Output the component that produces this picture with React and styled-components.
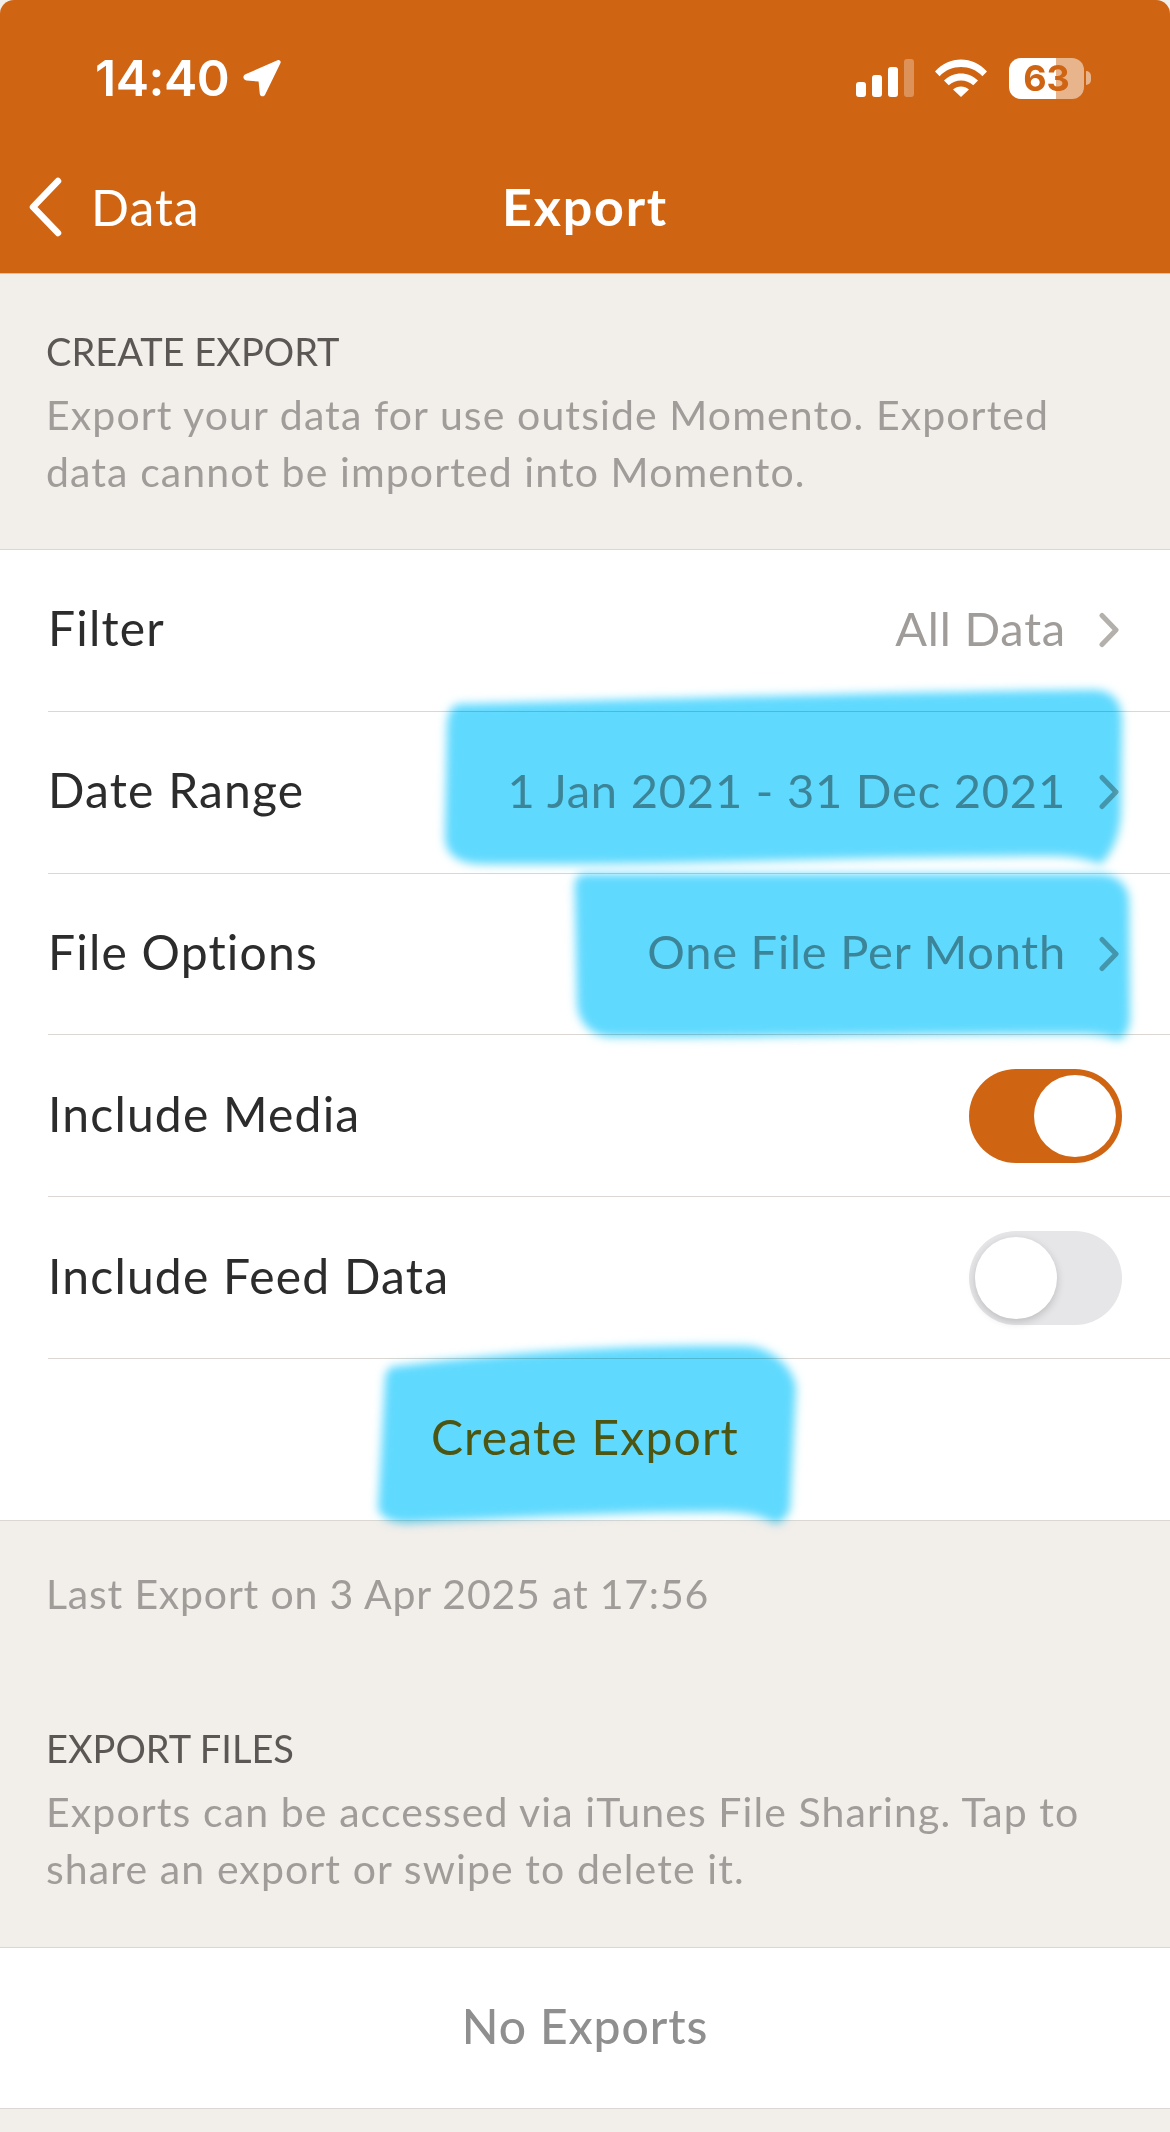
import styled, { createGlobalStyle } from 'styled-components';

const GlobalStyle = createGlobalStyle`
  html, body {
    margin: 0;
    padding: 0;
    background: #ffffff;
    font-family: "Lato", "Noto Sans", sans-serif;
  }
`;

const ORANGE = '#cf6413';

const LocationIcon = () => (
  <svg width="38" height="38" viewBox="0 0 38 38">
    <path
      d="M34.500 1.200c1.900-.9 3.800.9 3 2.800L22.200 35.500c-1.300 2.800-5 2.300-5.400-.8L15.600 22.600 3.500 21.500c-3.500-.3-4.300-4.600-1-6.200z"
      fill="#fff"
    />
  </svg>
);

const SignalIcon = () => (
  <svg width="60" height="38" viewBox="0 0 60 38">
    <rect x="0" y="23" width="10" height="15" rx="3" fill="#fff" />
    <rect x="16" y="16" width="10" height="22" rx="3" fill="#fff" />
    <rect x="32" y="8" width="10" height="30" rx="3" fill="#fff" />
    <rect x="48" y="0" width="10" height="38" rx="3" fill="#fff" opacity="0.3" />
  </svg>
);

const WifiIcon = () => (
  <svg width="52" height="38" viewBox="0 0 52 38">
    <path d="M0 12.500C14-3.500 38-3.500 52 12.500l-4.600 4.800C36 5 16 5 4.600 17.300z" fill="#fff" />
    <path d="M9 21.500c9.500-9.500 24.500-9.500 34 0l-4.700 4.800c-7-6.500-17.600-6.500-24.600 0z" fill="#fff" />
    <path d="M18 30.500c4.500-4 11.500-4 16 0L26 38z" fill="#fff" />
  </svg>
);

const BackIcon = () => (
  <svg width="36" height="60" viewBox="0 0 36 60">
    <path d="M31 4 6 30l25 26" fill="none" stroke="#fff" strokeWidth="6.500" strokeLinecap="round" strokeLinejoin="round" />
  </svg>
);

const ChevronIcon = () => (
  <svg width="22" height="36" viewBox="0 0 22 36">
    <path d="M4 3.500 18 18 4 32.500" fill="none" stroke="#b4b0ac" strokeWidth="5" strokeLinecap="round" strokeLinejoin="round" />
  </svg>
);

const Highlights = () => (
  <HighlightLayer viewBox="0 0 1170 2132">
    <defs>
      <filter id="soft" x="-5%" y="-5%" width="110%" height="110%">
        <feGaussianBlur stdDeviation="5" />
      </filter>
    </defs>
    <g fill="#5fd9fe" filter="url(#soft)">
      <path d="M462 704c250-6 420-12 632-14 18 0 28 12 28 30l-1 92c-1 22-8 40-20 52-14-4-26-8-50-8-190 0-380 10-568 8-20 0-38-6-38-28l2-110c1-14 4-22 15-22z" />
      <path d="M586 874h512c18 0 30 10 31 26l1 118c0 12-6 20-12 22-16-6-30-6-50-6-160 0-320 4-456 3-20 0-34-14-35-34l-2-108c-1-14 0-21 11-21z" />
      <path d="M398 1366c110-14 240-22 348-20 22 0 48 20 50 42l-6 122c-3 6-8 12-14 14-14-8-28-12-60-12-100 0-200 6-290 10-20 1-38 4-48-12l7-130c1-10 4-14 13-14z" />
    </g>
  </HighlightLayer>
);

const App = () => (
  <Page>
    <GlobalStyle />
    <Header>
      <StatusBar>
        <Clock>
          14:40
          <LocationIcon />
        </Clock>
        <StatusIcons>
          <SignalIcon />
          <WifiIcon />
          <Battery>
            <BatteryBody>63</BatteryBody>
            <BatteryCap />
          </Battery>
        </StatusIcons>
      </StatusBar>
      <NavBar>
        <BackButton>
          <BackIcon />
          Data
        </BackButton>
        <NavTitle>Export</NavTitle>
      </NavBar>
    </Header>

    <SectionHead>
      <SectionTitle>CREATE EXPORT</SectionTitle>
      <SectionText>
        Export your data for use outside Momento. Exported
        <br />
        data cannot be imported into Momento.
      </SectionText>
    </SectionHead>

    <List>
      <Row>
        <RowLabel>Filter</RowLabel>
        <RowValue>
          All Data
          <ChevronIcon />
        </RowValue>
      </Row>
      <Row>
        <RowLabel>Date Range</RowLabel>
        <RowValue>
          1 Jan 2021 - 31 Dec 2021
          <ChevronIcon />
        </RowValue>
      </Row>
      <Row>
        <RowLabel>File Options</RowLabel>
        <RowValue>
          One File Per Month
          <ChevronIcon />
        </RowValue>
      </Row>
      <Row>
        <RowLabel>Include Media</RowLabel>
        <Toggle $on>
          <Knob $on />
        </Toggle>
      </Row>
      <Row>
        <RowLabel>Include Feed Data</RowLabel>
        <Toggle>
          <Knob />
        </Toggle>
      </Row>
      <ActionRow>Create Export</ActionRow>
    </List>

    <LastExport>Last Export on 3 Apr 2025 at 17:56</LastExport>

    <SectionHead $tight>
      <SectionTitle>EXPORT FILES</SectionTitle>
      <SectionText>
        Exports can be accessed via iTunes File Sharing. Tap to
        <br />
        share an export or swipe to delete it.
      </SectionText>
    </SectionHead>

    <EmptyRow>No Exports</EmptyRow>
    <Highlights />
  </Page>
);

const Page = styled.div`
  position: relative;
  width: 1170px;
  height: 2132px;
  overflow: hidden;
  background: #f2eeea;
`;

const Header = styled.header`
  height: 274px;
  box-sizing: border-box;
  border-bottom: 1px solid #c9c4bf;
  border-radius: 14px 14px 0 0;
  background: ${ORANGE};
  color: #fff;
`;

const StatusBar = styled.div`
  height: 156px;
  display: flex;
  justify-content: space-between;
  align-items: center;
  padding: 0 79px 0 95px;
`;

const Clock = styled.div`
  display: flex;
  align-items: center;
  gap: 14px;
  font-family: "Inter", sans-serif;
  font-size: 50px;
  font-weight: 600;
  letter-spacing: -0.5px;
`;

const StatusIcons = styled.div`
  display: flex;
  align-items: center;
  gap: 19px;
`;

const Battery = styled.div`
  display: flex;
  align-items: center;
  gap: 2px;
  margin-left: 3px;
`;

const BatteryBody = styled.div`
  width: 75px;
  height: 41px;
  border-radius: 12px;
  background: linear-gradient(90deg, #fff 0 63%, #e8b48c 63% 100%);
  color: ${ORANGE};
  font-family: "Inter", sans-serif;
  font-size: 36px;
  font-weight: 700;
  line-height: 41px;
  text-align: center;
`;

const BatteryCap = styled.div`
  width: 5px;
  height: 14px;
  border-radius: 0 7px 7px 0;
  background: #e8b48c;
`;

const NavBar = styled.nav`
  position: relative;
  height: 102px;
  box-sizing: border-box;
  padding-bottom: 3px;
  display: flex;
  align-items: center;
  justify-content: center;
`;

const BackButton = styled.div`
  position: absolute;
  left: 27px;
  top: 0;
  bottom: 0;
  display: flex;
  align-items: center;
  gap: 28px;
  font-size: 50px;
  letter-spacing: 1px;
`;

const NavTitle = styled.div`
  font-size: 52px;
  font-weight: 700;
  letter-spacing: 1.8px;
`;

const SectionHead = styled.div`
  padding: ${(p) => (p.$tight ? '98px 46px 50px' : '49px 46px 49px')};
`;

const SectionTitle = styled.div`
  font-size: 38px;
  line-height: 56px;
  color: #5a5755;
`;

const SectionText = styled.div`
  margin-top: 7px;
  font-size: 41px;
  line-height: 57px;
  letter-spacing: 1.1px;
  color: #a09c99;
`;

const List = styled.div`
  border-top: 1px solid #dcd7d2;
  background: #fff;
`;

const Row = styled.div`
  height: 161.8px;
  box-sizing: border-box;
  margin-left: 48px;
  padding-right: 50px;
  border-bottom: 1px solid #dcd7d2;
  display: flex;
  align-items: center;
  justify-content: space-between;
`;

const RowLabel = styled.div`
  padding-bottom: 5px;
  font-size: 48px;
  letter-spacing: 1.2px;
  color: #2c2c2c;
`;

const RowValue = styled.div`
  padding-bottom: 5px;
  display: flex;
  align-items: center;
  gap: 32px;
  font-size: 47px;
  letter-spacing: 0.8px;
  color: #a09c99;

  svg {
    margin-top: 5px;
  }
`;

const Toggle = styled.div`
  width: 153px;
  height: 94px;
  box-sizing: border-box;
  margin: 1px -2px 0 0;
  padding: 6px;
  border-radius: 47px;
  display: flex;
  justify-content: ${(p) => (p.$on ? 'flex-end' : 'flex-start')};
  background: ${(p) => (p.$on ? ORANGE : '#e6e6e8')};
`;

const Knob = styled.div`
  width: 82px;
  height: 82px;
  border-radius: 50%;
  background: #fff;
  box-shadow: ${(p) => (p.$on ? 'none' : '0 3px 8px rgba(0, 0, 0, 0.18)')};
`;

const ActionRow = styled.div`
  height: 161.8px;
  box-sizing: border-box;
  padding-bottom: 5px;
  border-bottom: 1px solid #dcd7d2;
  display: flex;
  align-items: center;
  justify-content: center;
  font-size: 48px;
  letter-spacing: 1.2px;
  color: ${ORANGE};
`;

const LastExport = styled.div`
  padding: 44px 46px 0;
  font-size: 41px;
  line-height: 57px;
  letter-spacing: 0.8px;
  color: #a09c99;
`;

const EmptyRow = styled.div`
  height: 162px;
  box-sizing: border-box;
  padding-bottom: 4px;
  border-top: 1px solid #dcd7d2;
  border-bottom: 1px solid #dcd7d2;
  background: #fff;
  display: flex;
  align-items: center;
  justify-content: center;
  font-size: 48px;
  font-weight: 500;
  letter-spacing: 0.9px;
  color: #8f8f8f;
`;

const HighlightLayer = styled.svg`
  position: absolute;
  inset: 0;
  width: 1170px;
  height: 2132px;
  pointer-events: none;
  mix-blend-mode: multiply;
`;

export default App;
